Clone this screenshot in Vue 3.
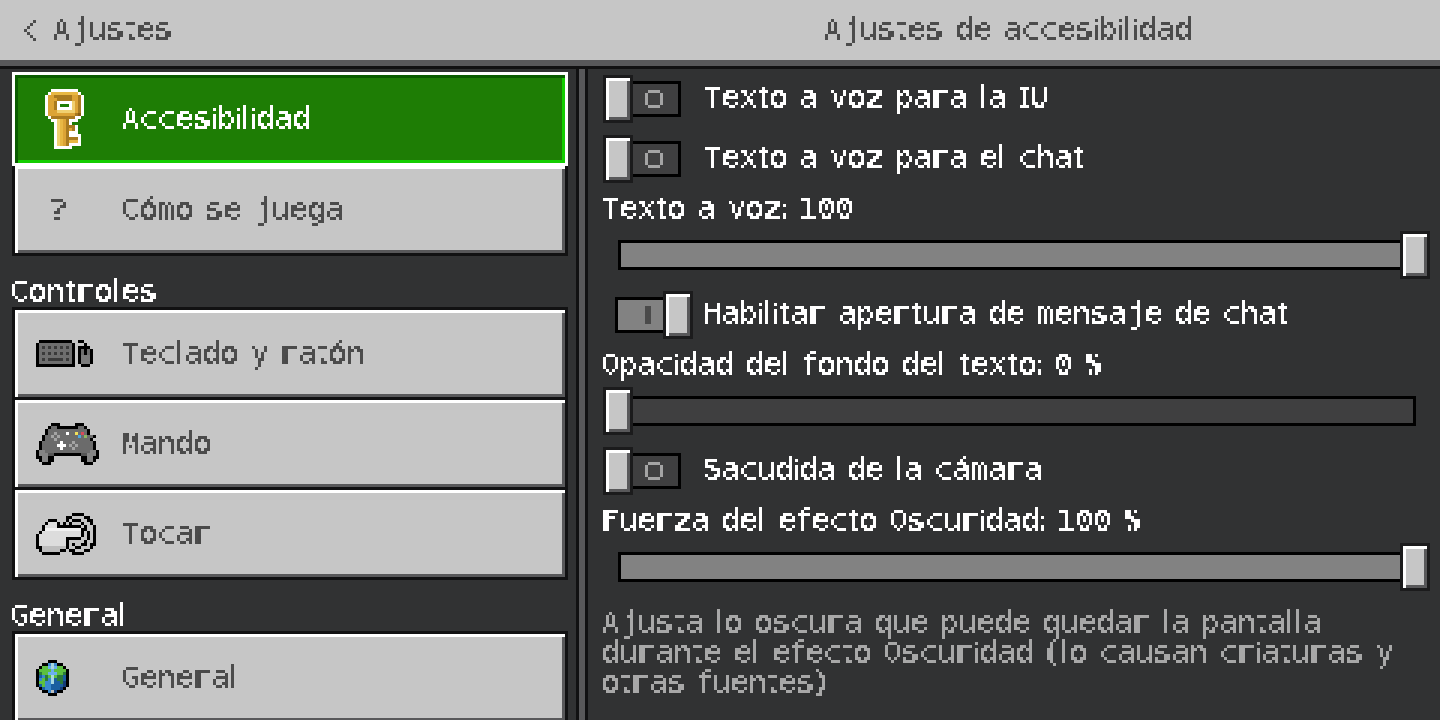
<script setup>
import { h } from 'vue'

const pal = {
  W: '#ffffff', g: '#dca436', l: '#f0d070', o: '#e8b844', d: '#a87a20', e: '#8a5f14',
  K: '#000000', f: '#6e6e6e', k: '#3a3a3a', m: '#7c7c7c',
  h: '#858585', a: '#6b6b6b', b: '#555555', s: '#a4a4a4', y: '#f1e05a', r: '#d94a5a', u: '#4aa8e0', n: '#90b860',
  p: '#dcdcdc', q: '#f0f0f0', c: '#bdbdbd',
  L: '#6ab0f0', S: '#a8d8e0', G: '#5cc040', D: '#2a7a3a', B: '#1a5ea0', C: '#3a8ad0', N: '#143c78', X: '#c0c0c0',
  T: '#4c4c4c', R: '#a4a4a4'
}
const art = {
  chev: ['...T', '..T.', '.T..', 'T...', '.T..', '..T.', '...T'],
  ring: ['.RRRR.', 'R....R', 'R....R', 'R....R', 'R....R', '.RRRR.'],
  key: [
    '..WWWWWWWWW..', '.WoooooooooW.', 'WggddddddggdW', 'WgggdddddggdW', 'WggdWWWWWlgdW',
    'WggdW...WlgdW', 'WggdWWWWWlgdW', 'WgggllllllgdW', 'WgggggggggdeW', '.WddddddddWW.',
    '..WWlogdWWW..', '...WlogdW....', '...WlogdddW..', '...WlogdgdW..', '...WlogdWWW..',
    '...WlogdWWWW.', '...WlogddddW.', '...WlogdoooW.', '...WlogdWWWW.', '...WWWWWW....'
  ],
  keyboard: [
    '.KKKKKKKKKKK..KK...',
    'KfffffffffffK...K..',
    'KfkfkfkfkfkfK.KKKK.',
    'KfffffffffffK.KfKfK',
    'KfkfkfkfkfkfK.KfKfK',
    'KfffffffffffK.KmmmK',
    'KfkfkkkkkfkfK.KmmmK',
    'KfffffffffffK.KmmmK',
    'KKKKKKKKKKKKK..KKK.'
  ],
  pad: [
    '.....KKK.....KKK.....', '....KaaKKKKKKKaaK....', '...KaaaaaaaaaaaaaK...',
    '...KaasaaaWaayaraK...', '..KaasasaaaaaauanaaK..', '..KaaasaaaaaaaaaaaK..',
    '.KaaaaaaWaaasaaaaaaK.', '.KaaaaaWWWasasaaaaaK.', '.KaaaaaaWaaasaaaaaaK.',
    'KhhaaaaaaaaaaaaaaahhK', 'KhhhbbKKKKKKKKKbbhhhK', 'KKhhKK.........KKhhKK',
    '.KhhKK.........KKhhK.', '..KKK...........KKK..'
  ],
  hand: [
    '............KKKK....',
    '..........KK....KK..',
    '....KKK...K.KKK..KK.',
    '...KpppK.K.K...K..K.',
    '..KppppKKKKKKKK.K..K',
    '..KqqqqqqqqqqqqKK..K',
    '.KpppppppppppppK.K.K',
    'KppppppppppppppK.K.K',
    'KpppppppppKKKKK..K.K',
    'KpppppppppK.....K..K',
    'KpppppppppK.K..KK.KK',
    'KKccccccccK..KK...K.',
    '.KccccccKK.KK...KK..',
    '..KKKKKK....KKKK....'
  ],
  globe: [
    '....KKK....', '..KKCSCKK..', '.KGGLSLGGK.', 'KGGGGLGGGGK', 'KDGGLLLGGDK', 'KBCDGSGDDBK',
    'KCGDCSBDDBK', 'KGGCCSBBDNK', 'KBGCCBBBBNK', '.KBCCBBBNK.', '..KKCXNKK..', '....KKK....'
  ]
}
const sprites = {}
for (const [name, rows] of Object.entries(art)) {
  const rects = []
  rows.forEach((row, y) => {
    ;[...row].forEach((c, x) => {
      if (pal[c]) rects.push({ x, y, fill: pal[c] })
    })
  })
  sprites[name] = { w: Math.max(...rows.map((r) => r.length)), h: rows.length, rects }
}

// advance of each character in font pixels (1 px = 3 screen px)
const cells = { i: 2, l: 3, t: 4, f: 5, k: 5, I: 4, ' ': 4, ':': 2, '.': 2, ',': 2, '(': 5, ')': 5 }
const inkOverride = { l: 3 }
const lift = { i: 1, '?': 1 }
const monoChars = 'jI0123456789'
const ctx = document.createElement('canvas').getContext('2d')
const SANS = '28px "DejaVu Sans"'
const MONO = '28px "DejaVu Sans Mono"'
const cache = {}
function glyph(c) {
  if (cache[c]) return cache[c]
  const w = (cells[c] || 6) * 3
  const mono = monoChars.includes(c)
  let tf = 'none'
  if (c === 'j') {
    tf = 'translate(1px, 0)'
  } else if (c !== ' ') {
    ctx.font = mono ? MONO : SANS
    const m = ctx.measureText(c)
    const ink = m.actualBoundingBoxLeft + m.actualBoundingBoxRight
    const s = Math.min(1.4, Math.max(0.6, (inkOverride[c] || w - 3) / ink))
    tf = `translate(${(m.actualBoundingBoxLeft * s).toFixed(2)}px, ${lift[c] || 0}px) scaleX(${s.toFixed(3)})`
  }
  return (cache[c] = { w, mono, tf })
}
const Tx = (props) =>
  h(
    'span',
    { class: 'px' },
    [...props.text].map((c) => {
      const g = glyph(c)
      return h('span', { class: g.mono ? 'g mono' : 'g', style: { width: g.w + 'px' } }, [
        h('span', { class: 'gi', style: { transform: g.tf } }, c)
      ])
    })
  )
Tx.props = ['text']

const groups = [
  { title: null, items: [{ label: 'Accesibilidad', icon: 'key', on: true }, { label: 'Cómo se juega', glyph: '?' }] },
  { title: 'Controles', items: [{ label: 'Teclado y ratón', icon: 'keyboard' }, { label: 'Mando', icon: 'pad' }, { label: 'Tocar', icon: 'hand' }] },
  { title: 'General', items: [{ label: 'General', icon: 'globe' }] }
]
const rows = [
  { type: 'toggle', label: 'Texto a voz para la IU' },
  { type: 'toggle', label: 'Texto a voz para el chat' },
  { type: 'label', label: 'Texto a voz: 100' },
  { type: 'slider', full: true },
  { type: 'toggle', label: 'Habilitar apertura de mensaje de chat', on: true },
  { type: 'label', label: 'Opacidad del fondo del texto: 0 %' },
  { type: 'slider', full: false },
  { type: 'toggle', label: 'Sacudida de la cámara' },
  { type: 'label', label: 'Fuerza del efecto Oscuridad: 100 %' },
  { type: 'slider', full: true }
]
const desc = [
  'Ajusta lo oscura que puede quedar la pantalla',
  'durante el efecto Oscuridad (lo causan criaturas y',
  'otras fuentes)'
]
</script>

<template>
  <svg class="defs" aria-hidden="true">
    <filter id="px" x="0" y="0" width="100%" height="100%" color-interpolation-filters="sRGB">
      <feFlood x="1" y="2" width="1" height="1" flood-color="#000" />
      <feComposite width="3" height="3" />
      <feTile result="grid" />
      <feComposite in="SourceGraphic" in2="grid" operator="in" />
      <feMorphology operator="dilate" radius="1" />
      <feComponentTransfer>
        <feFuncA type="discrete" tableValues="0 0 1 1 1" />
      </feComponentTransfer>
    </filter>
  </svg>
  <div class="page">
    <header class="top">
      <div class="top-left">
        <svg class="sprite chev" :width="sprites.chev.w * 3" :height="sprites.chev.h * 3" :viewBox="`0 0 ${sprites.chev.w} ${sprites.chev.h}`">
          <rect v-for="(r, i) in sprites.chev.rects" :key="i" :x="r.x" :y="r.y" width="1" height="1" :fill="r.fill" />
        </svg>
        <Tx class="dark" text="Ajustes" />
      </div>
      <div class="top-right"><Tx class="dark" text="Ajustes de accesibilidad" /></div>
    </header>
    <div class="main">
      <nav class="side">
        <section v-for="(g, gi) in groups" :key="gi" class="group">
          <div v-if="g.title" class="group-title"><Tx class="light" :text="g.title" /></div>
          <div class="list" :class="{ ruled: g.title }">
            <div v-for="it in g.items" :key="it.label" class="cell" :class="{ active: it.on }">
              <div class="face">
                <div class="slot" :class="'slot-' + (it.icon || 'glyph')">
                  <svg v-if="it.icon" class="sprite" :width="sprites[it.icon].w * 3" :height="sprites[it.icon].h * 3" :viewBox="`0 0 ${sprites[it.icon].w} ${sprites[it.icon].h}`">
                    <rect v-for="(r, i) in sprites[it.icon].rects" :key="i" :x="r.x" :y="r.y" width="1" height="1" :fill="r.fill" />
                  </svg>
                  <Tx v-else class="dark" :text="it.glyph" />
                </div>
                <Tx :class="it.on ? 'light' : 'dark'" :text="it.label" />
              </div>
            </div>
          </div>
        </section>
      </nav>
      <div class="divider"></div>
      <main class="panel">
        <template v-for="(r, i) in rows" :key="i">
          <div v-if="r.type === 'toggle'" class="toggle-row" :class="{ on: r.on }">
            <div class="toggle">
              <div class="thumb"></div>
              <div class="track">
                <i v-if="r.on" class="mark"></i>
                <svg v-else class="sprite" width="18" height="18" viewBox="0 0 6 6">
                  <rect v-for="(p, j) in sprites.ring.rects" :key="j" :x="p.x" :y="p.y" width="1" height="1" :fill="p.fill" />
                </svg>
              </div>
            </div>
            <Tx class="light tl" :text="r.label" />
          </div>
          <div v-else-if="r.type === 'label'" class="val"><Tx class="light" :text="r.label" /></div>
          <div v-else class="slider" :class="r.full ? 'full' : 'empty'">
            <div class="bar"></div>
            <div class="thumb knob"></div>
          </div>
        </template>
        <div class="desc">
          <Tx v-for="line in desc" :key="line" class="desc-line" :text="line" />
        </div>
      </main>
    </div>
  </div>
</template>

<style>
html, body { margin: 0; background: #313233; }
.px {
  display: block; height: 36px; margin-bottom: -6px; white-space: pre; font-size: 0;
  filter: url(#px);
}
.g { display: inline-block; height: 30px; vertical-align: top; font: 28px/30px "DejaVu Sans", sans-serif; -webkit-text-stroke: 0.25px currentColor; }
.g.mono { font-family: "DejaVu Sans Mono", monospace; }
.gi { display: inline-block; transform-origin: 0 50%; }
.dark { color: #4c4c4c; }
.light { color: #ffffff; }
.desc-line { color: #a8a8a8; }
</style>

<style scoped>
.defs { display: block; width: 0; height: 0; }
.page {
  width: 1440px; height: 720px; overflow: hidden; display: flex; flex-direction: column;
  background: #313233; font-family: "DejaVu Sans", sans-serif;
}
.sprite { display: block; shape-rendering: crispEdges; }

.top {
  height: 60px; flex: none; display: flex; background: #c6c6c6;
  border-bottom: 6px solid #58585a; box-shadow: 0 3px 0 #111112; position: relative; z-index: 1;
}
.top-left { width: 576px; display: flex; align-items: center; padding-left: 24px; box-sizing: border-box; }
.chev { margin-right: 18px; }
.top-right { flex: 1; margin-left: 3px; display: flex; align-items: center; justify-content: center; }

.main { flex: 1; min-height: 0; display: flex; margin-top: 3px; }
.side { width: 576px; flex: none; box-sizing: border-box; padding: 3px 8px 0 12px; overflow: hidden; }
.divider { width: 6px; flex: none; background: #58585a; border-left: 3px solid #111112; border-right: 3px solid #111112; }
.group-title { height: 51px; display: flex; align-items: flex-end; }
.ruled { border-top: 3px solid #111112; }
.cell {
  height: 90px; box-sizing: border-box; display: flex;
  border: 3px solid #111112; border-top: 0;
}
.face {
  flex: 1; display: flex; align-items: center; background: #c6c6c6;
  box-shadow: inset 3px 3px 0 #ffffff, inset -3px -3px 0 #58585a;
}
.cell.active { height: 94px; border: 3px solid #ffffff; }
.cell.active .face {
  background: #1e7d05;
  box-shadow: inset 3px 3px 0 #0a5c00, inset -3px -3px 0 #13cd00;
}
.slot { width: 108px; flex: none; box-sizing: border-box; padding-left: 21px; }
.slot-key { padding-left: 30px; }
.slot-glyph { padding-left: 36px; }

.panel { flex: 1; min-width: 0; box-sizing: border-box; padding: 6px 0 0 15px; }
.toggle-row { display: flex; align-items: center; height: 48px; margin-top: 12px; }
.toggle-row:first-child { margin-top: 0; }
.toggle { display: flex; align-items: center; }
.tl { margin-left: 24px; position: relative; top: -1px; }
.toggle-row.on .toggle { flex-direction: row-reverse; margin-left: 12px; }
.toggle-row.on .tl { margin-left: 12px; }
.thumb {
  width: 30px; height: 48px; box-sizing: border-box; border: 3px solid #1b1b1c; background: #c6c6c6; flex: none;
  box-shadow: inset 3px 3px 0 #ffffff, inset -3px -3px 0 #58585a; position: relative;
}
.track {
  width: 48px; height: 36px; box-sizing: border-box; border: 3px solid #000; border-left: 0;
  background: #3f3f40; display: flex; align-items: center; padding-left: 12px;
}
.toggle-row.on .track { border-left: 3px solid #000; border-right: 0; background: #828282; padding-left: 27px; }
.mark { display: block; width: 6px; height: 18px; background: #4a4a4a; }
.val { height: 30px; margin-top: 11px; }
.slider { position: relative; height: 48px; margin-top: 7px; width: 827px; box-sizing: border-box; padding: 9px 14px 0 15px; }
.bar { height: 30px; box-sizing: border-box; border: 3px solid #000; }
.full .bar { background: #828282; }
.empty .bar { background: #3f3f40; }
.knob { position: absolute; top: 0; }
.full .knob { right: 0; }
.empty .knob { left: 0; }
.desc { margin-top: 17px; }
</style>
